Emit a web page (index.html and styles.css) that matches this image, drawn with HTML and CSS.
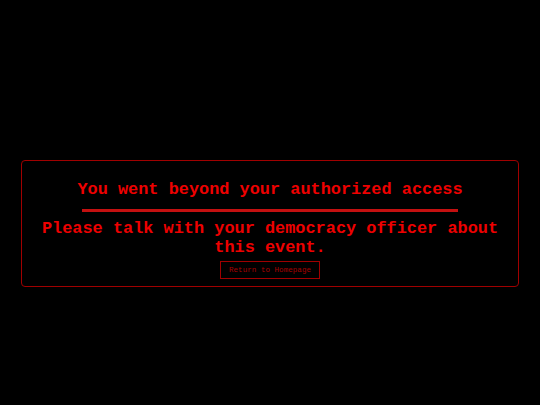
FILE: index.html
```html
<!DOCTYPE html>
<html lang="en">
<head>
<meta charset="utf-8">
<title>Access denied</title>
<link rel="stylesheet" href="styles.css">
</head>
<body>
<main class="page">
  <section class="alert">
    <h1 class="alert-title">You went beyond your authorized access</h1>
    <hr class="alert-rule">
    <p class="alert-text">Please talk with your democracy officer about this event.</p>
    <a class="alert-button" href="#">Return to Homepage</a>
  </section>
</main>
</body>
</html>
```

FILE: styles.css
```css
html, body {
  margin: 0;
  padding: 0;
  background: #000;
  height: 100%;
}

.page {
  padding: 160px 21px 0;
  font-family: Courier, "Nimbus Mono PS", "Nimbus Mono L", FreeMono, "Courier New", "Liberation Mono", monospace;
}

.alert {
  border: 1px solid #a00000;
  border-radius: 4px;
  padding: 19px 0 7px;
  display: flex;
  flex-direction: column;
  align-items: center;
  text-align: center;
}

.alert-title {
  margin: 0;
  font-size: 16.9px;
  line-height: 20px;
  font-weight: bold;
  color: #ee0000;
}

.alert-rule {
  width: 376px;
  height: 3px;
  margin: 9px 0 7px;
  border: 0;
  background: #c41010;
}

.alert-text {
  margin: 0;
  padding: 0 12px;
  font-size: 16.9px;
  line-height: 19px;
  font-weight: bold;
  color: #ee0000;
}

.alert-button {
  margin-top: 4px;
  display: block;
  width: 98px;
  height: 16px;
  line-height: 16px;
  border: 1px solid #a00000;
  color: #a80000;
  font-size: 7.6px;
  text-decoration: none;
}
```
